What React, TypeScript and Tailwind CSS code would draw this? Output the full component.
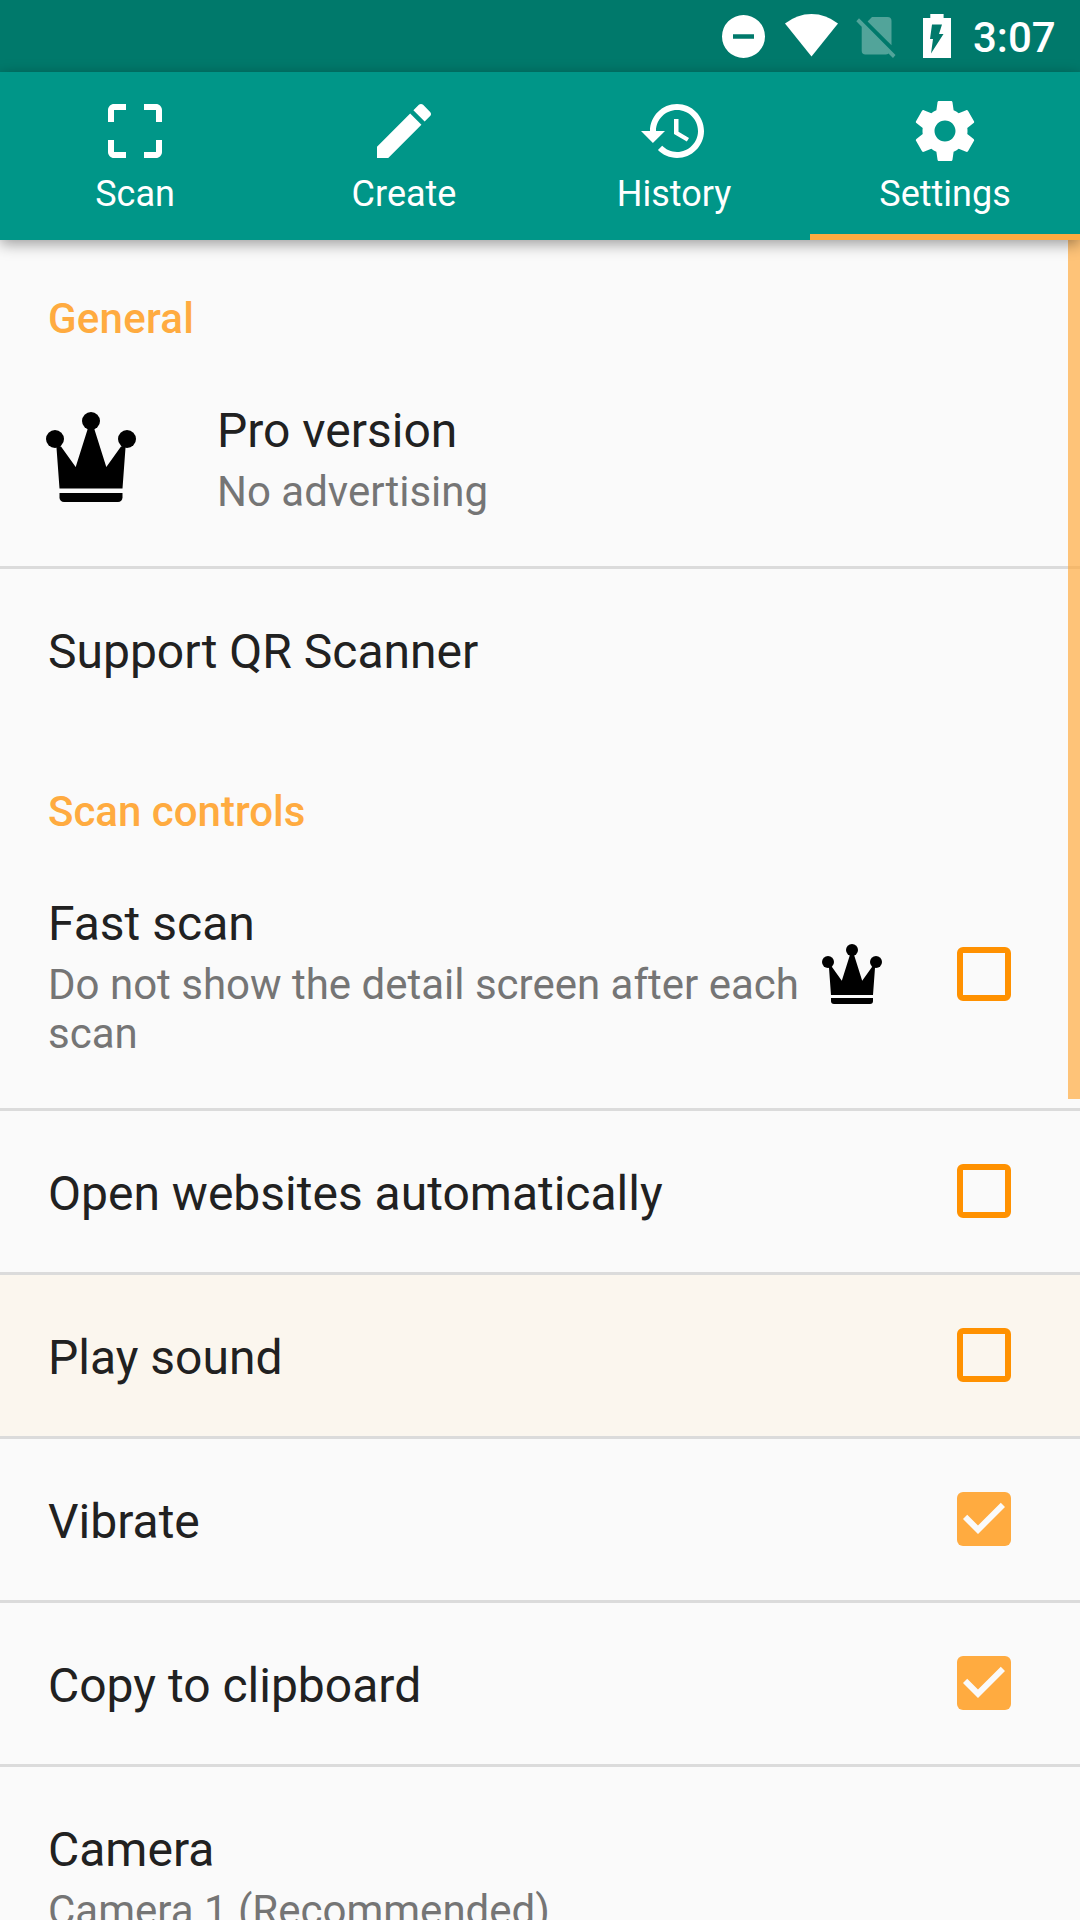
import React from "react";

type IconProps = { className?: string };

const tabIconPaths = {
  scan: "M3 5v4h2V5h4V3H5c-1.1 0-2 .9-2 2zm2 10H3v4c0 1.1.9 2 2 2h4v-2H5v-4zm14 4h-4v2h4c1.1 0 2-.9 2-2v-4h-2v4zm0-16h-4v2h4v4h2V5c0-1.1-.9-2-2-2z",
  create:
    "M3 17.25V21h3.75L17.81 9.94l-3.75-3.75L3 17.25zM20.71 7.04c.39-.39.39-1.02 0-1.41l-2.34-2.34c-.39-.39-1.02-.39-1.41 0l-1.83 1.83 3.75 3.75 1.83-1.83z",
  history:
    "M13 3c-4.97 0-9 4.03-9 9H1l3.89 3.89.07.14L9 12H6c0-3.87 3.13-7 7-7s7 3.13 7 7-3.13 7-7 7c-1.93 0-3.68-.79-4.94-2.06l-1.42 1.42C8.27 19.99 10.51 21 13 21c4.97 0 9-4.03 9-9s-4.03-9-9-9zm-1 5v5l4.28 2.54.72-1.21-3.5-2.08V8H12z",
  settings:
    "M19.43 12.98c.04-.32.07-.64.07-.98s-.03-.66-.07-.98l2.11-1.65c.19-.15.24-.42.12-.64l-2-3.46c-.12-.22-.39-.3-.61-.22l-2.49 1c-.52-.4-1.08-.73-1.69-.98l-.38-2.65C14.46 2.18 14.25 2 14 2h-4c-.25 0-.46.18-.49.42l-.38 2.65c-.61.25-1.17.59-1.69.98l-2.49-1c-.23-.09-.49 0-.61.22l-2 3.46c-.13.22-.07.49.12.64l2.11 1.65c-.04.32-.07.65-.07.98s.03.66.07.98l-2.11 1.65c-.19.15-.24.42-.12.64l2 3.46c.12.22.39.3.61.22l2.49-1c.52.4 1.08.73 1.69.98l.38 2.65c.03.24.24.42.49.42h4c.25 0 .46-.18.49-.42l.38-2.65c.61-.25 1.17-.59 1.69-.98l2.49 1c.23.09.49 0 .61-.22l2-3.46c.12-.22.07-.49-.12-.64l-2.11-1.65zM12 15.5c-1.93 0-3.5-1.57-3.5-3.5s1.57-3.5 3.5-3.5 3.5 1.57 3.5 3.5-1.57 3.5-3.5 3.5z",
};

const tabs = [
  { label: "Scan", path: tabIconPaths.scan, className: "" },
  { label: "Create", path: tabIconPaths.create, className: "pr-[2px]" },
  { label: "History", path: tabIconPaths.history, className: "pr-[2px]" },
  { label: "Settings", path: tabIconPaths.settings, className: "border-b-[6px] border-[#ffab40]" },
];

function Crown({ className }: IconProps) {
  return (
    <svg viewBox="0 0 90 90" className={className} fill="black">
      <circle cx="9" cy="27" r="9" />
      <circle cx="45" cy="9" r="9" />
      <circle cx="81" cy="27" r="9" />
      <path d="M10.3 33 13.5 76.5h63L79.7 33 75 34.5 60.3 55 48 16h-6L29.7 55 15 34.5z" />
      <path d="M13.5 81h63v4.5a4.5 4.5 0 0 1-4.5 4.5H18a4.5 4.5 0 0 1-4.5-4.5z" />
    </svg>
  );
}

function Checkbox({ checked }: { checked?: boolean }) {
  if (!checked) {
    return <div className="size-[54px] shrink-0 rounded-md border-[6px] border-[#ff9100]" />;
  }
  return (
    <div className="size-[54px] shrink-0 rounded-md bg-[#ffab40]">
      <svg viewBox="3 3 18 18" className="size-full" fill="#fafafa">
        <path d="M10 17l-5-5 1.41-1.41L10 14.17l7.59-7.59L19 8z" />
      </svg>
    </div>
  );
}

function StatusBar() {
  return (
    <div className="flex h-[72px] shrink-0 justify-end bg-[#00796b] pr-[23px] text-white">
      <svg viewBox="720 0 240 72" className="h-[72px] w-60" fill="white">
        <path
          fillRule="evenodd"
          d="M743.5 15a21.5 21.5 0 1 0 0 43 21.5 21.5 0 0 0 0-43zM733 34.3h21v4.4h-21z"
        />
        <path d="M811.5 56.6 785 23.6Q797 14 811.5 14T838 23.6z" />
        <g fill="white" fillOpacity=".32">
          <path d="M867.6 21.4 872 17h15.500q4 0 4 4v24.300z" />
          <path d="M859 18.300 895.500 55 893 58 888.500 53.500q-1 1-3 1H865.500q-3.800 0-3.800-3.800V26.700L856.300 21.300z" />
        </g>
        <path
          fillRule="evenodd"
          d="M930.300 14h13.300v4h7.400v40h-28V18h7.300zM932 24.500h10l-3 9.500h4.500L931 53.500l2-14.500h-3z"
        />
      </svg>
      <div className="ml-[13px] w-[84px] pt-[13px] text-[42px] leading-[49px] font-medium">3:07</div>
    </div>
  );
}

function TabBar() {
  return (
    <nav className="relative z-10 grid h-[168px] shrink-0 grid-cols-4 bg-[#009688] shadow-[0_4px_14px_rgba(0,0,0,0.38)]">
      {tabs.map((tab) => (
        <div key={tab.label} className={`flex flex-col items-center pt-[23px] text-white ${tab.className}`}>
          <svg viewBox="0 0 24 24" className="size-[72px] shrink-0" fill="currentColor">
            <path d={tab.path} />
          </svg>
          <span className="mt-[6px] text-[36px] leading-[42px]">{tab.label}</span>
        </div>
      ))}
    </nav>
  );
}

function SectionHeader({ className, children }: { className: string; children: string }) {
  return (
    <h2 className={`shrink-0 px-12 text-[42px] leading-[49px] font-medium text-[#ffab40] ${className}`}>
      {children}
    </h2>
  );
}

function Title({ children }: { children: string }) {
  return <div className="text-[48px] leading-[56px] text-[#212121]">{children}</div>;
}

function Summary({ children }: { children: string }) {
  return <div className="mt-2 text-[42px] leading-[49px] text-[#757575]">{children}</div>;
}

function ToggleRow({ label, checked, active }: { label: string; checked?: boolean; active?: boolean }) {
  return (
    <div
      className={
        active
          ? "flex h-[164px] shrink-0 items-center justify-between border-b-[3px] border-[#dbdbdb] bg-[#fbf6ee] pr-[69px] pl-12"
          : "flex h-[164px] shrink-0 items-center justify-between border-b-[3px] border-[#dbdbdb] pr-[69px] pl-12"
      }
    >
      <div className="pt-1">
        <Title>{label}</Title>
      </div>
      <div className="pb-px">
        <Checkbox checked={checked} />
      </div>
    </div>
  );
}

export default function App() {
  return (
    <div className="flex h-[1920px] w-[1080px] flex-col overflow-hidden bg-[#fafafa] font-[Roboto,sans-serif]">
      <StatusBar />
      <TabBar />
      <main className="relative flex min-h-0 flex-1 flex-col overflow-hidden">
        <SectionHeader className="h-[108px] pt-[54px] tracking-[0.25px]">General</SectionHeader>
        <div className="flex h-[221px] shrink-0 items-center border-b-[3px] border-[#dbdbdb] pl-[46px]">
          <Crown className="size-[90px]" />
          <div className="ml-[81px] pt-[5px]">
            <Title>Pro version</Title>
            <Summary>No advertising</Summary>
          </div>
        </div>
        <div className="flex h-[161px] shrink-0 items-center pt-1 pl-12">
          <Title>Support QR Scanner</Title>
        </div>
        <SectionHeader className="h-[110px] pt-[57px]">Scan controls</SectionHeader>
        <div className="flex h-[271px] shrink-0 items-center border-b-[3px] border-[#dbdbdb] pr-[69px] pl-12">
          <div className="w-[774px] shrink-0 pt-[6px] pr-2">
            <Title>Fast scan</Title>
            <Summary>Do not show the detail screen after each scan</Summary>
          </div>
          <Crown className="mr-[75px] size-[60px]" />
          <Checkbox />
        </div>
        <ToggleRow label="Open websites automatically" />
        <ToggleRow label="Play sound" active />
        <ToggleRow label="Vibrate" checked />
        <ToggleRow label="Copy to clipboard" checked />
        <div className="shrink-0 pt-[55px] pl-12">
          <Title>Camera</Title>
          <Summary>Camera 1 (Recommended)</Summary>
        </div>
        <div className="absolute top-0 right-0 h-[859px] w-3 bg-[#ffab40]/70" />
      </main>
    </div>
  );
}
